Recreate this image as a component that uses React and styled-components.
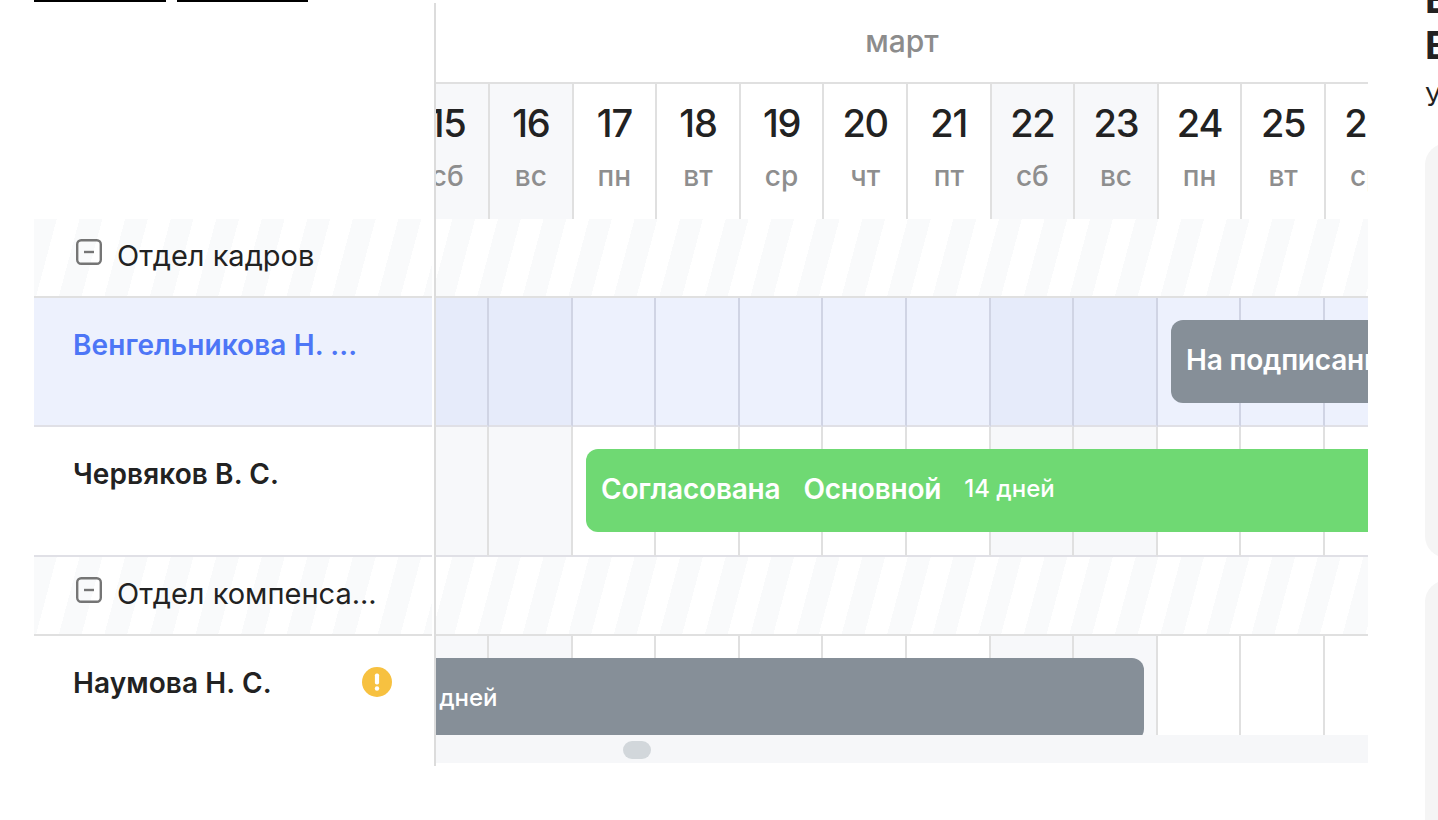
import React from "react";
import styled, { createGlobalStyle } from "styled-components";

const COL = 83.6;

const days = [
  [15, "сб", true],
  [16, "вс", true],
  [17, "пн"],
  [18, "вт"],
  [19, "ср"],
  [20, "чт"],
  [21, "пт"],
  [22, "сб", true],
  [23, "вс", true],
  [24, "пн"],
  [25, "вт"],
  [26, "ср"],
  [27, "чт"],
];

const GlobalStyle = createGlobalStyle`
  html, body {
    margin: 0;
    height: 820px;
    overflow: hidden;
    background: #fff;
  }
  body {
    font-family: Inter, "Noto Sans", sans-serif;
    color: #222;
  }
`;

const Page = styled.div`
  width: 1438px;
  height: 820px;
  overflow: hidden;
`;

const Tabs = styled.div`
  display: flex;
  gap: 11px;
  height: 3px;
  padding-left: 34px;
`;

const Tab = styled.div`
  width: ${(p) => p.$w}px;
  height: 2px;
  background: #000;
`;

const Board = styled.div`
  display: flex;
  align-items: flex-start;
  padding-left: 34px;
`;

const Names = styled.div`
  flex: none;
  width: 398px;
  margin-right: 2px;
  padding-top: 216px;
`;

const WEEKEND = "#f7f8fa";
const STRIPE = "#f9fafb";

const GroupRow = styled.div`
  display: flex;
  align-items: center;
  gap: 15px;
  box-sizing: border-box;
  height: 79px;
  padding: 0 0 4px 42px;
  background: repeating-linear-gradient(105deg, ${STRIPE} 0 22px, #fff 22px 44px);
  border-bottom: 2px solid #e0e0e0;
  font-size: 29px;
  white-space: nowrap;
`;

const Toggle = styled.svg`
  flex: none;
  width: 26px;
  height: 26px;
  margin-bottom: 7px;
`;

const NameRow = styled.div`
  display: flex;
  justify-content: space-between;
  align-items: flex-start;
  box-sizing: border-box;
  height: ${(p) => p.$h}px;
  padding: 31px 40px 0 39px;
  background: ${(p) => (p.$active ? "#edf1fd" : "#fff")};
  border-bottom: ${(p) => (p.$last ? "none" : "2px solid #e0e0e6")};
`;

const Name = styled.div`
  font-size: 28px;
  line-height: 32px;
  font-weight: 600;
  letter-spacing: 0.1px;
  white-space: nowrap;
  color: ${(p) => (p.$active ? "#4d76f6" : "#222")};
`;

const Warn = styled.svg`
  width: 30px;
  height: 30px;
`;

const Timeline = styled.div`
  flex: none;
  width: 932px;
  height: 763px;
  border-left: 2px solid #dcdcdc;
  overflow: hidden;
`;

const Month = styled.div`
  display: flex;
  align-items: center;
  justify-content: center;
  box-sizing: border-box;
  height: 81px;
  padding-bottom: 4px;
  border-bottom: 2px solid #e0e0e0;
  font-size: 30px;
  font-weight: 500;
  color: #8c8c8c;
`;

const Track = styled.div`
  display: grid;
  grid-template-columns: repeat(${days.length}, ${COL}px);
  margin-left: -29.6px;
  width: ${days.length * COL}px;
`;

const DayCell = styled.div`
  display: flex;
  flex-direction: column;
  align-items: center;
  box-sizing: border-box;
  height: 135px;
  padding-top: 16px;
  background: ${(p) => (p.$off ? WEEKEND : "#fff")};
  border-right: 2px solid #e0e0e0;
`;

const DayNumber = styled.div`
  font-size: 38px;
  line-height: 46px;
  font-weight: 500;
  letter-spacing: -1.2px;
  color: #222;
`;

const DayName = styled.div`
  margin-top: 13px;
  font-size: 28px;
  line-height: 34px;
  font-weight: 500;
  color: #8e8e8e;
`;

const Stripe = styled.div`
  box-sizing: border-box;
  height: 79px;
  background: repeating-linear-gradient(
    105deg,
    #fff 0 15.8px,
    ${STRIPE} 15.8px 37.8px,
    #fff 37.8px 44px
  );
  border-bottom: 2px solid #e0e0e0;
`;

const TimeRow = styled(Track)`
  position: relative;
  height: ${(p) => p.$h}px;
  margin-left: -30.6px;
  overflow: hidden;
`;

const TimeCell = styled.div`
  box-sizing: border-box;
  background: ${(p) =>
    p.$active ? (p.$off ? "#e6ebfa" : "#edf1fd") : p.$off ? WEEKEND : "#fff"};
  border-right: 2px solid ${(p) => (p.$active ? "#d0d4e4" : "#e0e0e0")};
  border-bottom: ${(p) => (p.$last ? "none" : "2px solid #e0e0e6")};
`;

const Bar = styled.div`
  position: absolute;
  top: 22px;
  left: ${(p) => p.$left}px;
  width: ${(p) => p.$width}px;
  height: 83px;
  display: flex;
  align-items: center;
  gap: 23px;
  box-sizing: border-box;
  padding: 0 0 4px 15px;
  background: ${(p) => p.$color};
  border-radius: 12px;
  color: #fff;
  white-space: nowrap;
`;

const BarStrong = styled.span`
  font-size: 28px;
  font-weight: 600;
  letter-spacing: -0.2px;
`;

const BarLight = styled.span`
  font-size: 24px;
  font-weight: 500;
`;

const Scroller = styled.div`
  box-sizing: border-box;
  height: 28px;
  padding: 6px 0 0 187px;
  background: #f6f7f9;
`;

const Thumb = styled.div`
  width: 28px;
  height: 18px;
  border-radius: 9px;
  background: #d2d7db;
`;

const Side = styled.aside`
  flex: none;
  width: 400px;
  margin: -27px 0 0 57px;
`;

const Title = styled.h2`
  margin: 0;
  font-size: 38px;
  line-height: 46px;
  font-weight: 700;
  white-space: nowrap;
`;

const Sub = styled.div`
  margin-top: 13px;
  font-size: 26px;
  line-height: 32px;
  white-space: nowrap;
`;

const Card = styled.div`
  height: ${(p) => p.$h}px;
  margin-top: ${(p) => p.$mt}px;
  background: #f5f5f5;
  border-radius: 22px;
`;

const MinusBox = () => (
  <Toggle viewBox="0 0 26 26" fill="none">
    <rect x="1.2" y="1.2" width="23.6" height="23.6" rx="4" stroke="#757575" strokeWidth="2.4" />
    <path d="M8 13h10" stroke="#757575" strokeWidth="2.4" />
  </Toggle>
);

const WarnIcon = () => (
  <Warn viewBox="0 0 30 30">
    <circle cx="15" cy="15" r="15" fill="#f7c140" />
    <rect x="12.9" y="6.5" width="4.2" height="11" rx="1.8" fill="#fff" />
    <circle cx="15" cy="21.5" r="2.2" fill="#fff" />
  </Warn>
);

const Cells = ({ active, last }) =>
  days.map(([n, , off]) => <TimeCell key={n} $off={off} $active={active} $last={last} />);

export default function App() {
  return (
    <Page>
      <GlobalStyle />
      <Tabs>
        <Tab $w={132} />
        <Tab $w={131} />
      </Tabs>
      <Board>
        <Names>
          <GroupRow>
            <MinusBox />
            Отдел кадров
          </GroupRow>
          <NameRow $h={129} $active>
            <Name $active>Венгельникова Н. ...</Name>
          </NameRow>
          <NameRow $h={130}>
            <Name>Червяков В. С.</Name>
          </NameRow>
          <GroupRow>
            <MinusBox />
            Отдел компенса...
          </GroupRow>
          <NameRow $h={99} $last>
            <Name>Наумова Н. С.</Name>
            <WarnIcon />
          </NameRow>
        </Names>
        <Timeline>
          <Month>март</Month>
          <Track>
            {days.map(([n, d, off]) => (
              <DayCell key={n} $off={off}>
                <DayNumber>{n}</DayNumber>
                <DayName>{d}</DayName>
              </DayCell>
            ))}
          </Track>
          <Stripe />
          <TimeRow $h={129}>
            <Cells active />
            <Bar $left={765.6} $width={500} $color="#868f98">
              <BarStrong>На подписании</BarStrong>
            </Bar>
          </TimeRow>
          <TimeRow $h={130}>
            <Cells />
            <Bar $left={180.6} $width={1000} $color="#6fd973">
              <BarStrong>Согласована</BarStrong>
              <BarStrong>Основной</BarStrong>
              <BarLight>14 дней</BarLight>
            </Bar>
          </TimeRow>
          <Stripe />
          <TimeRow $h={99}>
            <Cells last />
            <Bar $left={-13.4} $width={752} $color="#868f98">
              <BarLight>14 дней</BarLight>
            </Bar>
          </TimeRow>
          <Scroller>
            <Thumb />
          </Scroller>
        </Timeline>
        <Side>
          <Title>Ежегодный</Title>
          <Title>Вениамин</Title>
          <Sub>Увольнение</Sub>
          <Card $h={415} $mt={30} />
          <Card $h={300} $mt={22} />
        </Side>
      </Board>
    </Page>
  );
}
